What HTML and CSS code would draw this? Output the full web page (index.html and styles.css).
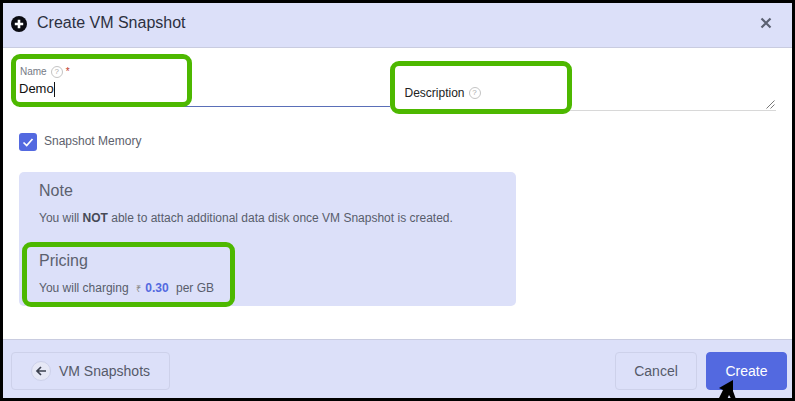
FILE: index.html
```html
<!DOCTYPE html>
<html lang="en">
<head>
<meta charset="utf-8">
<title>Create VM Snapshot</title>
<link rel="stylesheet" href="styles.css">
</head>
<body>
<div class="frame">
  <header class="head">
    <svg class="plus" viewBox="0 0 16 16" width="16" height="16"><circle cx="8" cy="8" r="8" fill="#0b0b12"/><path d="M8 3.8v8.4M3.8 8h8.4" stroke="#fff" stroke-width="2.6"/></svg>
    <h1 class="title">Create VM Snapshot</h1>
    <svg class="close" viewBox="0 0 12 12" width="12" height="12"><path d="M1.5 1.5l9 9M10.5 1.5l-9 9" stroke="#5b6172" stroke-width="2.2"/></svg>
  </header>
  <main class="body">
    <div class="fields">
      <div class="field name">
        <div class="label">Name <span class="help">?</span> <span class="req">*</span></div>
        <div class="value">Demo<span class="caret"></span></div>
      </div>
      <div class="field desc">
        <div class="desc-label">Description <span class="help">?</span></div>
        <svg class="grip" viewBox="0 0 9 9" width="9" height="9"><path d="M0.5 8.5L8.5 0.5M4.5 8.5L8.5 4.5" stroke="#555" stroke-width="0.8"/></svg>
      </div>
    </div>
    <label class="check">
      <span class="box"><svg viewBox="0 0 18 18" width="18" height="18"><path d="M4.5 9.5l3.2 3 5.8-6.5" fill="none" stroke="#fff" stroke-width="1.7"/></svg></span>
      <span class="check-text">Snapshot Memory</span>
    </label>
    <section class="note">
      <h2 class="note-title">Note</h2>
      <p class="note-text">You will <b>NOT</b> able to attach additional data disk once VM Snapshot is created.</p>
      <h2 class="note-title pricing">Pricing</h2>
      <p class="note-text">You will charging <span class="rupee">₹</span> <b class="price">0.30</b> <span class="unit">per GB</span></p>
    </section>
  </main>
  <footer class="foot">
    <button class="btn back"><span class="back-ico"><svg viewBox="0 0 12 12" width="12" height="12"><path d="M11 6H2M6 2L2 6l4 4" fill="none" stroke="#3d4250" stroke-width="1.7"/></svg></span>VM Snapshots</button>
    <button class="btn cancel">Cancel</button>
    <button class="btn create">Create</button>
  </footer>
  <div class="mark mark-name"></div>
  <div class="mark mark-desc"></div>
  <div class="mark mark-price"></div>
  <svg class="cursor" viewBox="0 0 24 22" width="24" height="22"><path d="M17 0L3 8l4 2L1 22h9l3-7 4 7h4l-4-11z" fill="#000"/></svg>
</div>
</body>
</html>
```
FILE: styles.css
```css
* { box-sizing: border-box; }
html, body { margin: 0; height: 100%; }
body { background: #000; font-family: "Liberation Sans", Arial, sans-serif; overflow: hidden; }
.frame { position: relative; width: 795px; height: 401px; padding: 3px; display: flex; flex-direction: column; }
.head { height: 45px; flex: none; background: #dce0f9; border-bottom: 1px solid #c9cce0; display: flex; align-items: center; padding: 0 20px 0 8px; }
.plus { flex: none; margin-top: -3px; }
.title { flex: 1; margin: -5px 0 0 10px; font-size: 16px; font-weight: 400; color: #2c3040; }
.close { flex: none; margin-top: -5px; }
.body { flex: 1; background: #fff; padding: 0 16px; display: flex; flex-direction: column; min-height: 0; }
.fields { display: flex; height: 63px; flex: none; }
.field { position: relative; }
.name { width: 371px; border-bottom: 1px solid #5a6fb8; height: 59px; padding-top: 18px; }
.desc { margin-left: 14px; width: 373px; border-bottom: 1px solid #d8d8d8; height: 63px; padding: 38px 0 0 1px; }
.label { font-size: 10px; line-height: 12px; color: #767a85; padding-left: 1px; display: flex; align-items: center; gap: 3px; }
.value { font-size: 13px; line-height: 16px; color: #111; margin-top: 3px; display: flex; align-items: center; }
.caret { width: 1px; height: 15px; background: #111; }
.desc-label { font-size: 12px; line-height: 14px; color: #222; display: flex; align-items: center; gap: 3px; }
.help { width: 12px; height: 12px; border: 1px solid #c4c4c4; border-radius: 50%; font-size: 8px; line-height: 10px; text-align: center; color: #aaa; margin-left: 1px; }
.req { color: #c0392b; }
.grip { position: absolute; right: 1px; bottom: 1px; }
.check { display: flex; align-items: flex-start; gap: 7px; margin-top: 22px; height: 19px; flex: none; font-size: 12px; line-height: 14px; color: #5d616c; }
.check-text { margin-top: 1px; }
.box { width: 18px; height: 18px; border-radius: 3px; background: #5369e0; display: block; }
.box svg { display: block; }
.note { width: 497px; height: 134px; flex: none; margin-top: 20px; background: #dce0f9; border-radius: 5px; padding: 10px 20px; color: #585d6b; }
.note-title { margin: 0; font-size: 16px; line-height: 18px; font-weight: 400; color: #5b606e; }
.note-text { margin: 11px 0 0; font-size: 12px; line-height: 14px; }
.note-text b { color: #464a57; }
.pricing { margin-top: 27px; }
.rupee { font-size: 9px; color: #888; margin-left: 4px; }
.note-text .price { color: #5369e0; margin-left: 1px; }
.unit { margin-left: 4px; }
.foot { height: 59px; flex: none; background: #dce0f9; border-top: 1px solid #c9cce0; display: flex; align-items: center; padding: 3px 5px 0 8px; gap: 9px; }
.btn { height: 38px; border-radius: 4px; border: 1px solid #cdd1ea; background: transparent; font-family: inherit; font-size: 14px; color: #555a69; display: flex; align-items: center; justify-content: center; padding: 0; }
.back { width: 159px; gap: 8px; margin-right: auto; }
.back-ico { width: 20px; height: 20px; border-radius: 50%; background: #e6e8f6; border: 1px solid #cdd1ea; display: flex; align-items: center; justify-content: center; }
.cancel { width: 82px; }
.create { width: 81px; background: #5369e0; border-color: #5369e0; color: #fff; }
.mark { position: absolute; border: 5px solid #4db800; border-radius: 9px; }
.mark-name { left: 11px; top: 54px; width: 181px; height: 53px; }
.mark-desc { left: 390px; top: 61px; width: 182px; height: 53px; }
.mark-price { left: 22px; top: 242px; width: 213px; height: 65px; }
.cursor { position: absolute; left: 716px; top: 380px; }
```
